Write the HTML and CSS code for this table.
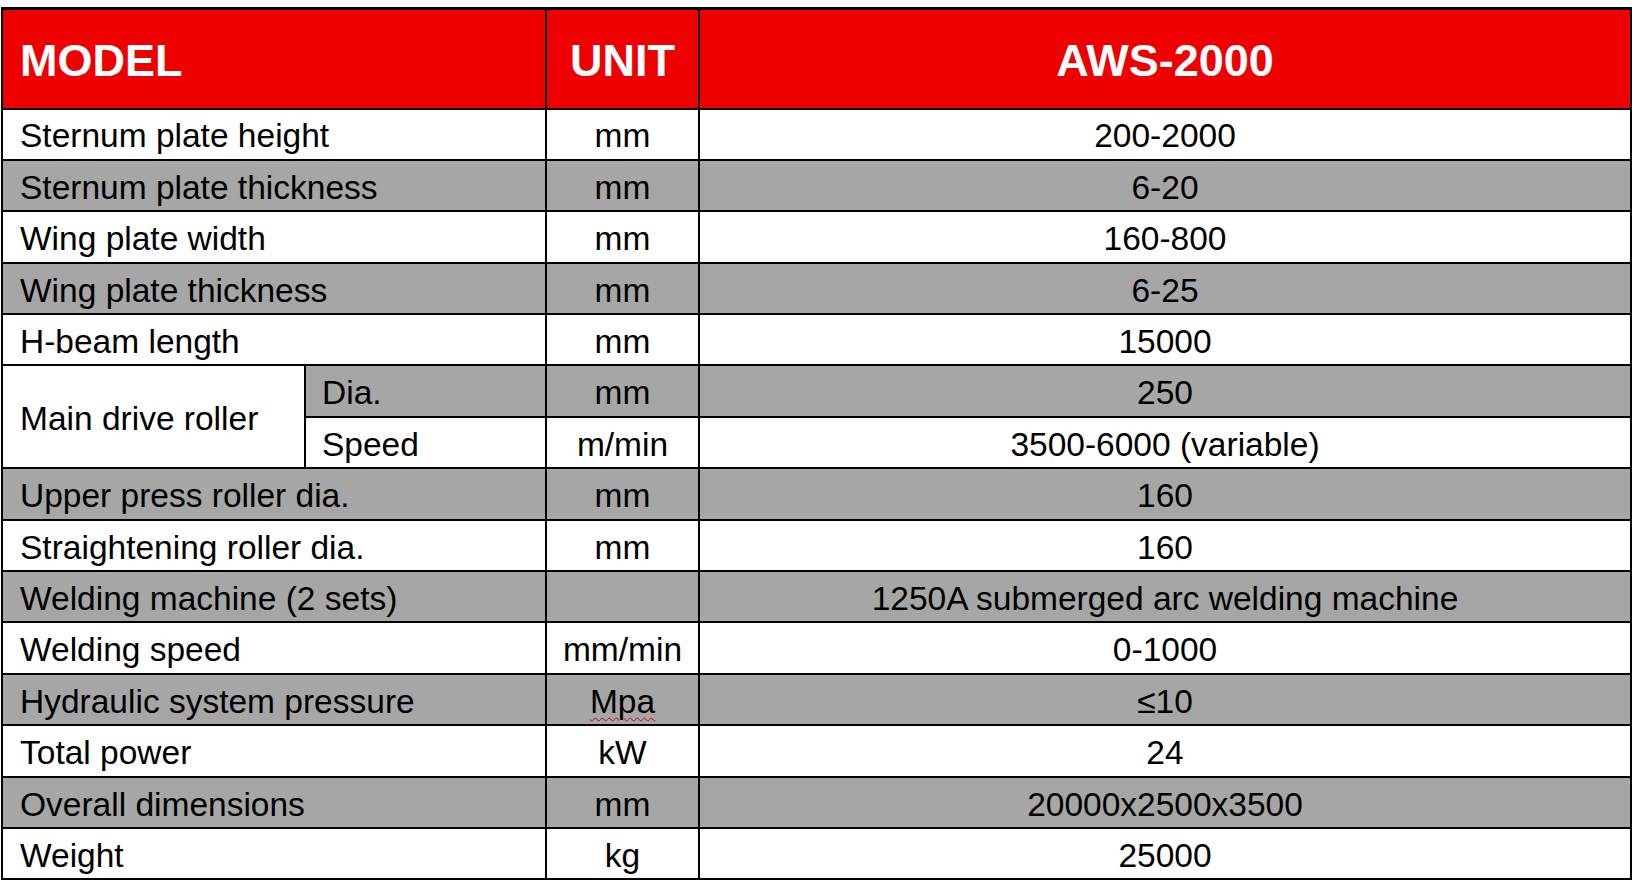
FILE: index.html
```html
<!DOCTYPE html>
<html lang="en">
<head>
<meta charset="utf-8">
<title>AWS-2000 Specifications</title>
<link rel="stylesheet" href="styles.css">
</head>
<body>
<table class="spec">
  <colgroup>
    <col class="c-name">
    <col class="c-sub">
    <col class="c-unit">
    <col class="c-val">
  </colgroup>
  <thead>
    <tr class="head">
      <th class="name" colspan="2">MODEL</th>
      <th class="unit">UNIT</th>
      <th class="val">AWS-2000</th>
    </tr>
  </thead>
  <tbody>
    <tr class="w"><td class="name" colspan="2">Sternum plate height</td><td class="unit">mm</td><td class="val">200-2000</td></tr>
    <tr class="g"><td class="name" colspan="2">Sternum plate thickness</td><td class="unit">mm</td><td class="val">6-20</td></tr>
    <tr class="w"><td class="name" colspan="2">Wing plate width</td><td class="unit">mm</td><td class="val">160-800</td></tr>
    <tr class="g"><td class="name" colspan="2">Wing plate thickness</td><td class="unit">mm</td><td class="val">6-25</td></tr>
    <tr class="w"><td class="name" colspan="2">H-beam length</td><td class="unit">mm</td><td class="val">15000</td></tr>
    <tr class="g"><td class="name white" rowspan="2">Main drive roller</td><td class="name sub">Dia.</td><td class="unit">mm</td><td class="val">250</td></tr>
    <tr class="w"><td class="name sub">Speed</td><td class="unit">m/min</td><td class="val">3500-6000 (variable)</td></tr>
    <tr class="g"><td class="name" colspan="2">Upper press roller dia.</td><td class="unit">mm</td><td class="val">160</td></tr>
    <tr class="w"><td class="name" colspan="2">Straightening roller dia.</td><td class="unit">mm</td><td class="val">160</td></tr>
    <tr class="g"><td class="name" colspan="2">Welding machine (2 sets)</td><td class="unit"></td><td class="val">1250A submerged arc welding machine</td></tr>
    <tr class="w"><td class="name" colspan="2">Welding speed</td><td class="unit">mm/min</td><td class="val">0-1000</td></tr>
    <tr class="g"><td class="name" colspan="2">Hydraulic system pressure</td><td class="unit"><span class="spell">Mpa</span></td><td class="val">≤10</td></tr>
    <tr class="w"><td class="name" colspan="2">Total power</td><td class="unit">kW</td><td class="val">24</td></tr>
    <tr class="g"><td class="name" colspan="2">Overall dimensions</td><td class="unit">mm</td><td class="val">20000x2500x3500</td></tr>
    <tr class="w"><td class="name" colspan="2">Weight</td><td class="unit">kg</td><td class="val">25000</td></tr>
  </tbody>
</table>
</body>
</html>
```

FILE: styles.css
```css
html, body {
  margin: 0;
  padding: 0;
  background: #ffffff;
}

body {
  font-family: "Liberation Sans", Arial, sans-serif;
  color: #000000;
}

.spec {
  margin: 7px 0 0 1px;
  width: 1631px;
  border-collapse: collapse;
  table-layout: fixed;
  border: 2px solid #000;
  border-top-width: 3px;
}

.c-name { width: 303px; }
.c-sub { width: 241px; }
.c-unit { width: 153px; }
.c-val { width: auto; }

.spec th,
.spec td {
  border: 2px solid #000;
  padding: 4px 0 0 0;
  vertical-align: middle;
  white-space: nowrap;
  overflow: hidden;
}

.head {
  height: 100px;
  background: #ee0000;
}

.head th {
  color: #ffffff;
  font-size: 45px;
  font-weight: bold;
  line-height: 1;
}

.spec tbody tr {
  height: 51.4px;
}

.spec tbody td {
  font-size: 33.5px;
  line-height: 1;
}

.w { background: #ffffff; }
.g { background: #a6a6a6; }
.white { background: #ffffff; }

.spec .name {
  text-align: left;
  padding-left: 17px;
}

.spec .sub {
  padding-left: 16px;
}

.unit,
.val {
  text-align: center;
}

.spell {
  text-decoration: underline wavy #d00000;
  text-decoration-thickness: 1px;
  text-underline-offset: 4px;
}
```
